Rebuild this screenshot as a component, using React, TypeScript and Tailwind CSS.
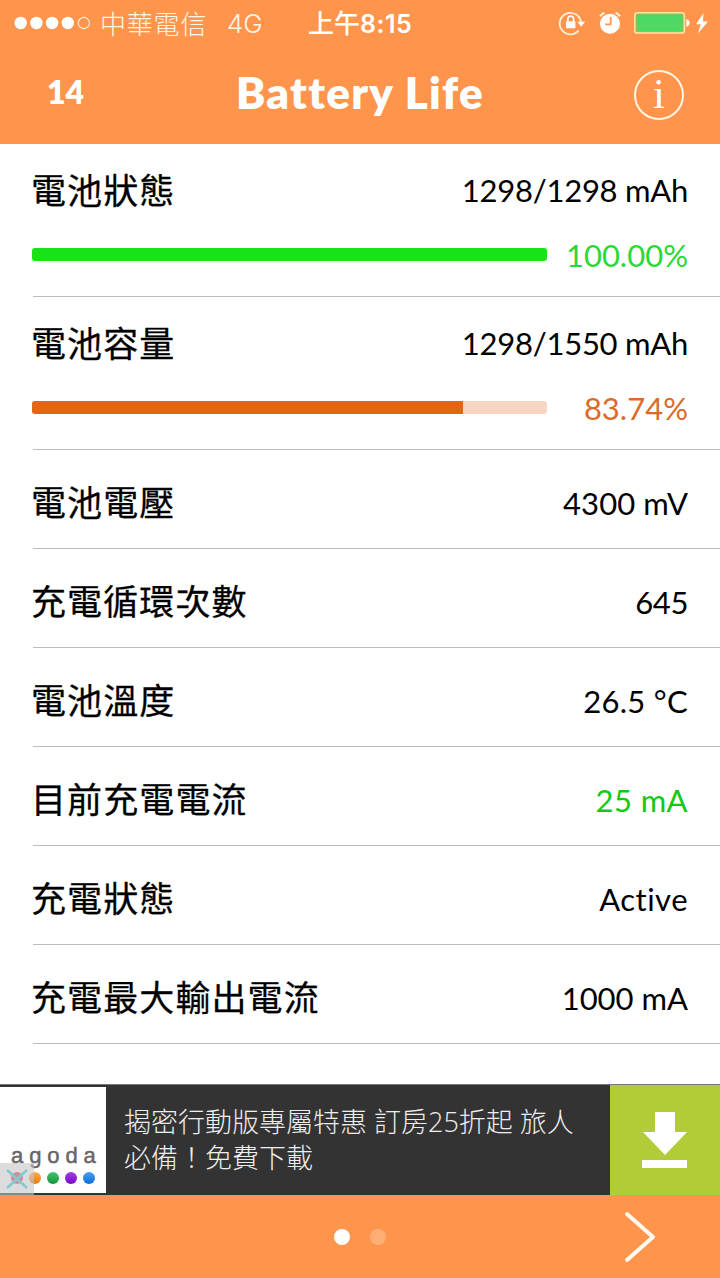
import React from 'react';

type Row = {
  label: string;
  value: string;
  spacing: string;
  color?: string;
};

type Gauge = {
  label: string;
  value: string;
  percent: number;
  percentColor: string;
  fill: string;
  track: string;
};

const gauges: Gauge[] = [
  {
    label: '電池狀態',
    value: '1298/1298 mAh',
    percent: 100,
    percentColor: 'text-[#2bd936]',
    fill: 'bg-[#17e317]',
    track: 'bg-[#c8f7c8]',
  },
  {
    label: '電池容量',
    value: '1298/1550 mAh',
    percent: 83.74,
    percentColor: 'text-[#dc6a28]',
    fill: 'bg-[#e26518]',
    track: 'bg-[#f7d5c3]',
  },
];

const rows: Row[] = [
  { label: '電池電壓', value: '4300 mV', spacing: 'tracking-[0.1px]' },
  { label: '充電循環次數', value: '645', spacing: 'tracking-[-0.4px]' },
  { label: '電池溫度', value: '26.5 °C', spacing: 'tracking-[0.3px]' },
  { label: '目前充電電流', value: '25 mA', spacing: 'tracking-[0.4px]', color: 'text-[#13c913]' },
  { label: '充電狀態', value: 'Active', spacing: 'tracking-[0.5px]' },
  { label: '充電最大輸出電流', value: '1000 mA', spacing: 'tracking-[0px]' },
];

function StatusBar() {
  return (
    <div className="flex h-[46px] items-center pl-[14px] text-[#fff6e6]">
      <svg width="78" height="14" viewBox="0 0 78 14" fill="#fff">
        <circle cx="6.7" cy="7" r="6.2" />
        <circle cx="22.4" cy="7" r="6.2" />
        <circle cx="38.1" cy="7" r="6.2" />
        <circle cx="53.8" cy="7" r="6.2" />
        <circle cx="69.8" cy="7" r="5.6" fill="none" stroke="#fff0d8" strokeWidth="1.1" />
      </svg>
      <span className="ml-[8px] w-[127px] whitespace-nowrap font-['Noto_Sans_CJK_TC',sans-serif] text-[26px] leading-[46px] font-light tracking-[0.8px]">
        中華電信
      </span>
      <span className="w-[81px] pt-[1px] font-['Inter',sans-serif] text-[26px] leading-[46px] font-light">4G</span>
      <span className="w-[250px] whitespace-nowrap font-['Noto_Sans_CJK_TC',sans-serif] text-[26px] leading-[46px] font-medium text-white">
        上午<span className="font-['Inter',sans-serif] text-[25px] font-semibold tracking-[0.5px]">8:15</span>
      </span>
      <svg width="28" height="26" viewBox="0 0 28 26" className="shrink-0">
        <path d="M20.5 20.6A10.7 10.7 0 1 1 23 12" fill="none" stroke="#fff0d8" strokeWidth="1.8" />
        <path d="M19.2 11.8h8l-4 4.6z" fill="#fff" />
        <rect x="8" y="11.3" width="9.4" height="7" rx="0.8" fill="#fff" />
        <path d="M9.8 11.6V9a2.9 2.9 0 0 1 5.8 0v2.6" fill="none" stroke="#fff" strokeWidth="1.6" />
      </svg>
      <svg width="22" height="24" viewBox="0 0 22 24" className="ml-[13px] shrink-0">
        <circle cx="11" cy="12.8" r="10" fill="#fff" />
        <path d="M1 5.4A13 13 0 0 1 5.4 1.6M16.6 1.6A13 13 0 0 1 21 5.4" fill="none" stroke="#fff0d8" strokeWidth="2.2" />
        <path d="M11.7 6v7.4H6.2" fill="none" stroke="#ff954c" strokeWidth="1.8" />
      </svg>
      <svg width="74" height="24" viewBox="0 0 74 24" className="ml-[13px] shrink-0">
        <rect x="0.8" y="1.8" width="49.6" height="20.2" rx="2.6" fill="none" stroke="#ffe7a8" strokeWidth="1.5" />
        <rect x="2.4" y="3.3" width="46.4" height="17.2" rx="1.2" fill="#4cd964" />
        <path d="M52.4 8.3c4.2 0 4.2 7.4 0 7.4z" fill="#fff" />
        <path d="M69.5 2L62 13.2h4.7L64 22.4l10-12h-5z" fill="#fff" />
      </svg>
    </div>
  );
}

function Header() {
  return (
    <header className="h-[144px] bg-[#ff954c] text-white">
      <StatusBar />
      <div className="grid h-[98px] grid-cols-[1fr_auto_1fr] items-center">
        <span className="pb-[7px] pl-[47px] text-[32px] font-extrabold">14</span>
        <h1 className="pb-[7px] text-[44px] leading-none font-extrabold tracking-[1.3px] whitespace-nowrap">
          Battery Life
        </h1>
        <div className="flex justify-end pr-[36px]">
          <div className="flex size-[50px] items-center justify-center rounded-full border-2 border-[#fff6e6] font-['Liberation_Serif',serif] text-[43px] leading-none">
            <span className="-mt-[4px]">i</span>
          </div>
        </div>
      </div>
    </header>
  );
}

function Label({ children }: { children: React.ReactNode }) {
  return (
    <span className="font-['Noto_Sans_CJK_TC',sans-serif] text-[35px] leading-[52px] tracking-[1.1px] [-webkit-text-stroke:0.3px_black]">
      {children}
    </span>
  );
}

function GaugeRow({ gauge }: { gauge: Gauge }) {
  return (
    <li className="ml-[33px] h-[153px] border-b border-[#bcbcbc] pt-[20px] pr-[32px]">
      <div className="-ml-[2px] flex h-[52px] items-center justify-between">
        <span className="-mt-[2px]">
          <Label>{gauge.label}</Label>
        </span>
        <span className="text-[31px] tracking-[-0.25px]">{gauge.value}</span>
      </div>
      <div className="-ml-[1px] flex h-[77px] items-center justify-between">
        <div className={`h-[13px] w-[515px] overflow-hidden rounded-[3px] ${gauge.track}`}>
          <div className={`h-full ${gauge.fill}`} style={{ width: `${gauge.percent}%` }} />
        </div>
        <span className={`pt-[1px] text-[31px] ${gauge.percentColor}`}>{gauge.percent.toFixed(2)}%</span>
      </div>
    </li>
  );
}

function ValueRow({ row }: { row: Row }) {
  return (
    <li className="ml-[33px] flex h-[99px] items-center justify-between border-b border-[#bcbcbc] pt-[8px] pr-[32px]">
      <span className="-mt-[4px] -ml-[2px]">
        <Label>{row.label}</Label>
      </span>
      <span className={`text-[31px] ${row.spacing} ${row.color ?? ''}`}>{row.value}</span>
    </li>
  );
}

function AdBanner() {
  return (
    <div className="relative flex h-[111px] border-t border-[#777] bg-[#333]">
      <div className="mt-[2px] h-[106px] w-[106px] bg-white pt-[53px] pl-[11px]">
        <div className="font-['Liberation_Sans',sans-serif] text-[22px] leading-[32px] tracking-[5.9px] text-[#666] [-webkit-text-stroke:0.5px_#666]">
          agoda
        </div>
        <div className="flex gap-[6px]">
          <span className="size-3 rounded-full bg-[#e23b46]" />
          <span className="size-3 rounded-full bg-linear-to-b from-[#ffad45] to-[#e77c08]" />
          <span className="size-3 rounded-full bg-linear-to-b from-[#43c26e] to-[#109440]" />
          <span className="size-3 rounded-full bg-linear-to-b from-[#a63ae6] to-[#7800c4]" />
          <span className="size-3 rounded-full bg-linear-to-b from-[#45a0ee] to-[#006fd6]" />
        </div>
      </div>
      <p className="w-[504px] pt-[19px] pl-[18px] font-['Open_Sans','Noto_Sans_CJK_TC',sans-serif] text-[27px] leading-[36px] font-light whitespace-nowrap text-[#eee]">
        揭密行動版專屬特惠 訂房25折起 旅人
        <br />
        必備！免費下載
      </p>
      <div className="flex w-[110px] items-center justify-center bg-[#b2cc38]">
        <svg width="46" height="56" viewBox="0 0 46 56" fill="#fff">
          <path d="M13 0h20v20h12L23 43 1 20h12zM0 48h45v8H0z" />
        </svg>
      </div>
      <div className="absolute bottom-0 left-0 flex h-[32px] w-[34px] items-center justify-center bg-[#c4c4c4]/60">
        <svg width="22" height="20" viewBox="0 0 22 20" fill="none" stroke="#83c9d3" strokeWidth="2.4">
          <path d="M1 1l20 18M21 1L1 19" />
        </svg>
      </div>
    </div>
  );
}

function Footer() {
  return (
    <footer className="grid h-[83px] grid-cols-[1fr_auto_1fr] items-center bg-[#ff954c]">
      <div />
      <div className="flex gap-[20px]">
        <span className="size-4 rounded-full bg-white" />
        <span className="size-4 rounded-full bg-[#ffaf76]" />
      </div>
      <div className="flex justify-end pr-[64px]">
        <svg width="32" height="52" viewBox="0 0 32 52" fill="none" stroke="#fffaf0" strokeWidth="4" strokeLinecap="round" strokeLinejoin="round">
          <path d="M3 3l26 23L3 49" />
        </svg>
      </div>
    </footer>
  );
}

export default function App() {
  return (
    <div className="flex h-[1278px] w-[720px] flex-col overflow-hidden bg-white font-['Lato',sans-serif] text-black [font-variant-ligatures:none]">
      <Header />
      <ul className="h-[940px]">
        {gauges.map((g) => (
          <GaugeRow key={g.label} gauge={g} />
        ))}
        {rows.map((r) => (
          <ValueRow key={r.label} row={r} />
        ))}
      </ul>
      <AdBanner />
      <Footer />
    </div>
  );
}
